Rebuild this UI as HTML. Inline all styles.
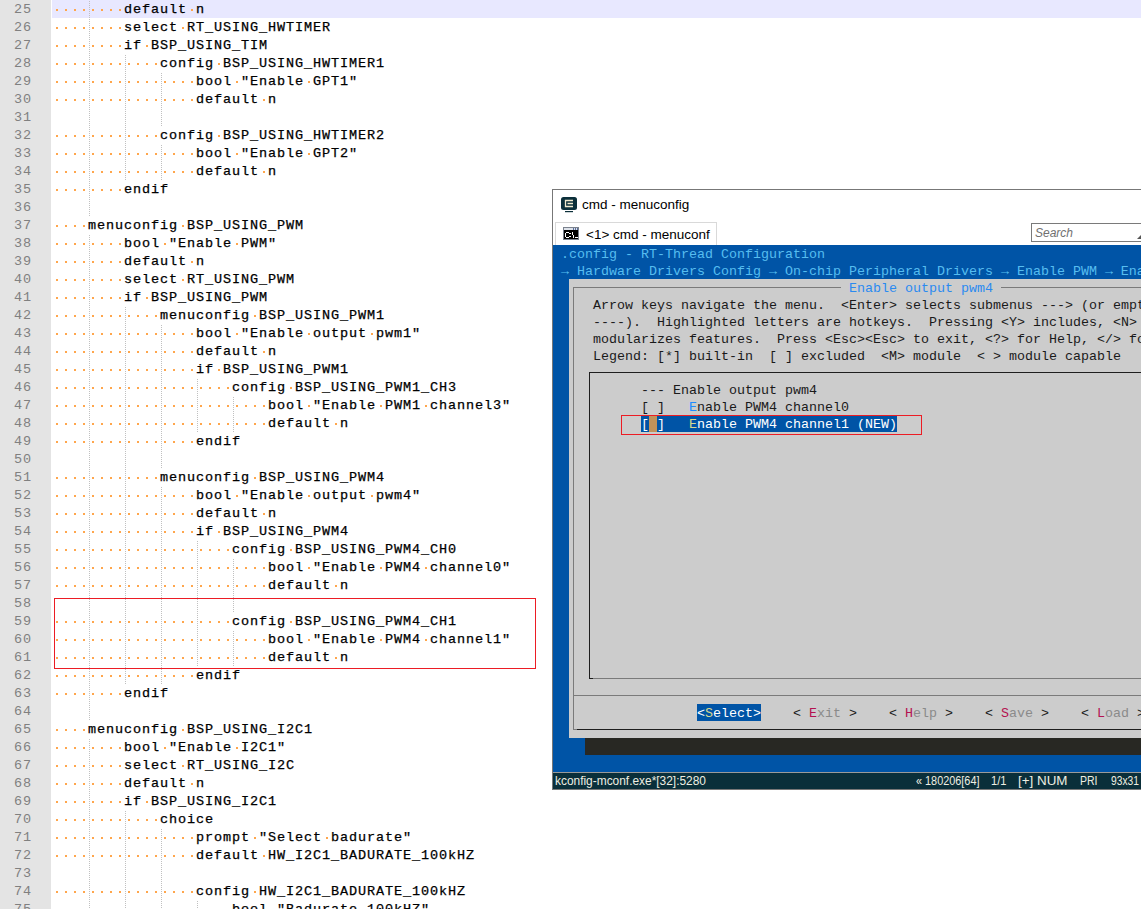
<!DOCTYPE html>
<html><head><meta charset="utf-8"><style>
html,body{margin:0;padding:0}
body{width:1141px;height:909px;overflow:hidden;position:relative;background:#fff}
.ln{position:absolute;left:52px;height:18px;line-height:18px;font:13.5px "Liberation Mono",monospace;letter-spacing:0.9px;padding-top:2px;white-space:pre;color:#000;-webkit-text-stroke:0.25px #000}
.nm{position:absolute;left:0;width:32px;text-align:right;height:18px;line-height:18px;font:13.5px "Liberation Mono",monospace;letter-spacing:0.9px;padding-top:2px;color:#808080}
.t{position:absolute;height:17px;line-height:17px;padding-top:2px;font:13.333px "Liberation Mono",monospace;white-space:pre}
.ui{position:absolute;font-family:"Liberation Sans",sans-serif;white-space:pre}
</style></head><body>
<div style="position:absolute;left:0;top:0;width:51px;height:909px;background:#e4e4e4"></div>
<div style="position:absolute;left:52px;top:0;width:1089px;height:18px;background:#e8e8ff"></div>
<svg style="position:absolute;left:0;top:0" width="1141" height="909">
<defs><pattern id="gp" width="1" height="2" patternUnits="userSpaceOnUse"><rect x="0" y="1" width="1" height="1" fill="#c0c0c0"/></pattern></defs>
<g fill="url(#gp)"><rect x="89" y="0" width="1" height="18"/><rect x="89" y="18" width="1" height="18"/><rect x="89" y="36" width="1" height="18"/><rect x="89" y="54" width="1" height="18"/><rect x="125" y="54" width="1" height="18"/><rect x="89" y="72" width="1" height="18"/><rect x="125" y="72" width="1" height="18"/><rect x="161" y="72" width="1" height="18"/><rect x="89" y="90" width="1" height="18"/><rect x="125" y="90" width="1" height="18"/><rect x="161" y="90" width="1" height="18"/><rect x="89" y="108" width="1" height="18"/><rect x="125" y="108" width="1" height="18"/><rect x="161" y="108" width="1" height="18"/><rect x="89" y="126" width="1" height="18"/><rect x="125" y="126" width="1" height="18"/><rect x="89" y="144" width="1" height="18"/><rect x="125" y="144" width="1" height="18"/><rect x="161" y="144" width="1" height="18"/><rect x="89" y="162" width="1" height="18"/><rect x="125" y="162" width="1" height="18"/><rect x="161" y="162" width="1" height="18"/><rect x="89" y="180" width="1" height="18"/><rect x="89" y="198" width="1" height="18"/><rect x="89" y="234" width="1" height="18"/><rect x="89" y="252" width="1" height="18"/><rect x="89" y="270" width="1" height="18"/><rect x="89" y="288" width="1" height="18"/><rect x="89" y="306" width="1" height="18"/><rect x="125" y="306" width="1" height="18"/><rect x="89" y="324" width="1" height="18"/><rect x="125" y="324" width="1" height="18"/><rect x="161" y="324" width="1" height="18"/><rect x="89" y="342" width="1" height="18"/><rect x="125" y="342" width="1" height="18"/><rect x="161" y="342" width="1" height="18"/><rect x="89" y="360" width="1" height="18"/><rect x="125" y="360" width="1" height="18"/><rect x="161" y="360" width="1" height="18"/><rect x="89" y="378" width="1" height="18"/><rect x="125" y="378" width="1" height="18"/><rect x="161" y="378" width="1" height="18"/><rect x="197" y="378" width="1" height="18"/><rect x="89" y="396" width="1" height="18"/><rect x="125" y="396" width="1" height="18"/><rect x="161" y="396" width="1" height="18"/><rect x="197" y="396" width="1" height="18"/><rect x="233" y="396" width="1" height="18"/><rect x="89" y="414" width="1" height="18"/><rect x="125" y="414" width="1" height="18"/><rect x="161" y="414" width="1" height="18"/><rect x="197" y="414" width="1" height="18"/><rect x="233" y="414" width="1" height="18"/><rect x="89" y="432" width="1" height="18"/><rect x="125" y="432" width="1" height="18"/><rect x="161" y="432" width="1" height="18"/><rect x="89" y="450" width="1" height="18"/><rect x="125" y="450" width="1" height="18"/><rect x="161" y="450" width="1" height="18"/><rect x="89" y="468" width="1" height="18"/><rect x="125" y="468" width="1" height="18"/><rect x="89" y="486" width="1" height="18"/><rect x="125" y="486" width="1" height="18"/><rect x="161" y="486" width="1" height="18"/><rect x="89" y="504" width="1" height="18"/><rect x="125" y="504" width="1" height="18"/><rect x="161" y="504" width="1" height="18"/><rect x="89" y="522" width="1" height="18"/><rect x="125" y="522" width="1" height="18"/><rect x="161" y="522" width="1" height="18"/><rect x="89" y="540" width="1" height="18"/><rect x="125" y="540" width="1" height="18"/><rect x="161" y="540" width="1" height="18"/><rect x="197" y="540" width="1" height="18"/><rect x="89" y="558" width="1" height="18"/><rect x="125" y="558" width="1" height="18"/><rect x="161" y="558" width="1" height="18"/><rect x="197" y="558" width="1" height="18"/><rect x="233" y="558" width="1" height="18"/><rect x="89" y="576" width="1" height="18"/><rect x="125" y="576" width="1" height="18"/><rect x="161" y="576" width="1" height="18"/><rect x="197" y="576" width="1" height="18"/><rect x="233" y="576" width="1" height="18"/><rect x="89" y="594" width="1" height="18"/><rect x="125" y="594" width="1" height="18"/><rect x="161" y="594" width="1" height="18"/><rect x="197" y="594" width="1" height="18"/><rect x="233" y="594" width="1" height="18"/><rect x="89" y="612" width="1" height="18"/><rect x="125" y="612" width="1" height="18"/><rect x="161" y="612" width="1" height="18"/><rect x="197" y="612" width="1" height="18"/><rect x="89" y="630" width="1" height="18"/><rect x="125" y="630" width="1" height="18"/><rect x="161" y="630" width="1" height="18"/><rect x="197" y="630" width="1" height="18"/><rect x="233" y="630" width="1" height="18"/><rect x="89" y="648" width="1" height="18"/><rect x="125" y="648" width="1" height="18"/><rect x="161" y="648" width="1" height="18"/><rect x="197" y="648" width="1" height="18"/><rect x="233" y="648" width="1" height="18"/><rect x="89" y="666" width="1" height="18"/><rect x="125" y="666" width="1" height="18"/><rect x="161" y="666" width="1" height="18"/><rect x="89" y="684" width="1" height="18"/><rect x="89" y="702" width="1" height="18"/><rect x="89" y="738" width="1" height="18"/><rect x="89" y="756" width="1" height="18"/><rect x="89" y="774" width="1" height="18"/><rect x="89" y="792" width="1" height="18"/><rect x="89" y="810" width="1" height="18"/><rect x="125" y="810" width="1" height="18"/><rect x="89" y="828" width="1" height="18"/><rect x="125" y="828" width="1" height="18"/><rect x="161" y="828" width="1" height="18"/><rect x="89" y="846" width="1" height="18"/><rect x="125" y="846" width="1" height="18"/><rect x="161" y="846" width="1" height="18"/><rect x="89" y="864" width="1" height="18"/><rect x="125" y="864" width="1" height="18"/><rect x="161" y="864" width="1" height="18"/><rect x="89" y="882" width="1" height="18"/><rect x="125" y="882" width="1" height="18"/><rect x="161" y="882" width="1" height="18"/><rect x="89" y="900" width="1" height="18"/><rect x="125" y="900" width="1" height="18"/><rect x="161" y="900" width="1" height="18"/><rect x="197" y="900" width="1" height="18"/><rect x="89" y="918" width="1" height="18"/><rect x="125" y="918" width="1" height="18"/><rect x="161" y="918" width="1" height="18"/><rect x="197" y="918" width="1" height="18"/></g>
<path fill="#ffa64c" d="M56 9h2v2h-2zM65 9h2v2h-2zM74 9h2v2h-2zM83 9h2v2h-2zM92 9h2v2h-2zM101 9h2v2h-2zM110 9h2v2h-2zM119 9h2v2h-2zM191 9h2v2h-2zM56 27h2v2h-2zM65 27h2v2h-2zM74 27h2v2h-2zM83 27h2v2h-2zM92 27h2v2h-2zM101 27h2v2h-2zM110 27h2v2h-2zM119 27h2v2h-2zM182 27h2v2h-2zM56 45h2v2h-2zM65 45h2v2h-2zM74 45h2v2h-2zM83 45h2v2h-2zM92 45h2v2h-2zM101 45h2v2h-2zM110 45h2v2h-2zM119 45h2v2h-2zM146 45h2v2h-2zM56 63h2v2h-2zM65 63h2v2h-2zM74 63h2v2h-2zM83 63h2v2h-2zM92 63h2v2h-2zM101 63h2v2h-2zM110 63h2v2h-2zM119 63h2v2h-2zM128 63h2v2h-2zM137 63h2v2h-2zM146 63h2v2h-2zM155 63h2v2h-2zM218 63h2v2h-2zM56 81h2v2h-2zM65 81h2v2h-2zM74 81h2v2h-2zM83 81h2v2h-2zM92 81h2v2h-2zM101 81h2v2h-2zM110 81h2v2h-2zM119 81h2v2h-2zM128 81h2v2h-2zM137 81h2v2h-2zM146 81h2v2h-2zM155 81h2v2h-2zM164 81h2v2h-2zM173 81h2v2h-2zM182 81h2v2h-2zM191 81h2v2h-2zM236 81h2v2h-2zM308 81h2v2h-2zM56 99h2v2h-2zM65 99h2v2h-2zM74 99h2v2h-2zM83 99h2v2h-2zM92 99h2v2h-2zM101 99h2v2h-2zM110 99h2v2h-2zM119 99h2v2h-2zM128 99h2v2h-2zM137 99h2v2h-2zM146 99h2v2h-2zM155 99h2v2h-2zM164 99h2v2h-2zM173 99h2v2h-2zM182 99h2v2h-2zM191 99h2v2h-2zM263 99h2v2h-2zM56 135h2v2h-2zM65 135h2v2h-2zM74 135h2v2h-2zM83 135h2v2h-2zM92 135h2v2h-2zM101 135h2v2h-2zM110 135h2v2h-2zM119 135h2v2h-2zM128 135h2v2h-2zM137 135h2v2h-2zM146 135h2v2h-2zM155 135h2v2h-2zM218 135h2v2h-2zM56 153h2v2h-2zM65 153h2v2h-2zM74 153h2v2h-2zM83 153h2v2h-2zM92 153h2v2h-2zM101 153h2v2h-2zM110 153h2v2h-2zM119 153h2v2h-2zM128 153h2v2h-2zM137 153h2v2h-2zM146 153h2v2h-2zM155 153h2v2h-2zM164 153h2v2h-2zM173 153h2v2h-2zM182 153h2v2h-2zM191 153h2v2h-2zM236 153h2v2h-2zM308 153h2v2h-2zM56 171h2v2h-2zM65 171h2v2h-2zM74 171h2v2h-2zM83 171h2v2h-2zM92 171h2v2h-2zM101 171h2v2h-2zM110 171h2v2h-2zM119 171h2v2h-2zM128 171h2v2h-2zM137 171h2v2h-2zM146 171h2v2h-2zM155 171h2v2h-2zM164 171h2v2h-2zM173 171h2v2h-2zM182 171h2v2h-2zM191 171h2v2h-2zM263 171h2v2h-2zM56 189h2v2h-2zM65 189h2v2h-2zM74 189h2v2h-2zM83 189h2v2h-2zM92 189h2v2h-2zM101 189h2v2h-2zM110 189h2v2h-2zM119 189h2v2h-2zM56 225h2v2h-2zM65 225h2v2h-2zM74 225h2v2h-2zM83 225h2v2h-2zM182 225h2v2h-2zM56 243h2v2h-2zM65 243h2v2h-2zM74 243h2v2h-2zM83 243h2v2h-2zM92 243h2v2h-2zM101 243h2v2h-2zM110 243h2v2h-2zM119 243h2v2h-2zM164 243h2v2h-2zM236 243h2v2h-2zM56 261h2v2h-2zM65 261h2v2h-2zM74 261h2v2h-2zM83 261h2v2h-2zM92 261h2v2h-2zM101 261h2v2h-2zM110 261h2v2h-2zM119 261h2v2h-2zM191 261h2v2h-2zM56 279h2v2h-2zM65 279h2v2h-2zM74 279h2v2h-2zM83 279h2v2h-2zM92 279h2v2h-2zM101 279h2v2h-2zM110 279h2v2h-2zM119 279h2v2h-2zM182 279h2v2h-2zM56 297h2v2h-2zM65 297h2v2h-2zM74 297h2v2h-2zM83 297h2v2h-2zM92 297h2v2h-2zM101 297h2v2h-2zM110 297h2v2h-2zM119 297h2v2h-2zM146 297h2v2h-2zM56 315h2v2h-2zM65 315h2v2h-2zM74 315h2v2h-2zM83 315h2v2h-2zM92 315h2v2h-2zM101 315h2v2h-2zM110 315h2v2h-2zM119 315h2v2h-2zM128 315h2v2h-2zM137 315h2v2h-2zM146 315h2v2h-2zM155 315h2v2h-2zM254 315h2v2h-2zM56 333h2v2h-2zM65 333h2v2h-2zM74 333h2v2h-2zM83 333h2v2h-2zM92 333h2v2h-2zM101 333h2v2h-2zM110 333h2v2h-2zM119 333h2v2h-2zM128 333h2v2h-2zM137 333h2v2h-2zM146 333h2v2h-2zM155 333h2v2h-2zM164 333h2v2h-2zM173 333h2v2h-2zM182 333h2v2h-2zM191 333h2v2h-2zM236 333h2v2h-2zM308 333h2v2h-2zM371 333h2v2h-2zM56 351h2v2h-2zM65 351h2v2h-2zM74 351h2v2h-2zM83 351h2v2h-2zM92 351h2v2h-2zM101 351h2v2h-2zM110 351h2v2h-2zM119 351h2v2h-2zM128 351h2v2h-2zM137 351h2v2h-2zM146 351h2v2h-2zM155 351h2v2h-2zM164 351h2v2h-2zM173 351h2v2h-2zM182 351h2v2h-2zM191 351h2v2h-2zM263 351h2v2h-2zM56 369h2v2h-2zM65 369h2v2h-2zM74 369h2v2h-2zM83 369h2v2h-2zM92 369h2v2h-2zM101 369h2v2h-2zM110 369h2v2h-2zM119 369h2v2h-2zM128 369h2v2h-2zM137 369h2v2h-2zM146 369h2v2h-2zM155 369h2v2h-2zM164 369h2v2h-2zM173 369h2v2h-2zM182 369h2v2h-2zM191 369h2v2h-2zM218 369h2v2h-2zM56 387h2v2h-2zM65 387h2v2h-2zM74 387h2v2h-2zM83 387h2v2h-2zM92 387h2v2h-2zM101 387h2v2h-2zM110 387h2v2h-2zM119 387h2v2h-2zM128 387h2v2h-2zM137 387h2v2h-2zM146 387h2v2h-2zM155 387h2v2h-2zM164 387h2v2h-2zM173 387h2v2h-2zM182 387h2v2h-2zM191 387h2v2h-2zM200 387h2v2h-2zM209 387h2v2h-2zM218 387h2v2h-2zM227 387h2v2h-2zM290 387h2v2h-2zM56 405h2v2h-2zM65 405h2v2h-2zM74 405h2v2h-2zM83 405h2v2h-2zM92 405h2v2h-2zM101 405h2v2h-2zM110 405h2v2h-2zM119 405h2v2h-2zM128 405h2v2h-2zM137 405h2v2h-2zM146 405h2v2h-2zM155 405h2v2h-2zM164 405h2v2h-2zM173 405h2v2h-2zM182 405h2v2h-2zM191 405h2v2h-2zM200 405h2v2h-2zM209 405h2v2h-2zM218 405h2v2h-2zM227 405h2v2h-2zM236 405h2v2h-2zM245 405h2v2h-2zM254 405h2v2h-2zM263 405h2v2h-2zM308 405h2v2h-2zM380 405h2v2h-2zM425 405h2v2h-2zM56 423h2v2h-2zM65 423h2v2h-2zM74 423h2v2h-2zM83 423h2v2h-2zM92 423h2v2h-2zM101 423h2v2h-2zM110 423h2v2h-2zM119 423h2v2h-2zM128 423h2v2h-2zM137 423h2v2h-2zM146 423h2v2h-2zM155 423h2v2h-2zM164 423h2v2h-2zM173 423h2v2h-2zM182 423h2v2h-2zM191 423h2v2h-2zM200 423h2v2h-2zM209 423h2v2h-2zM218 423h2v2h-2zM227 423h2v2h-2zM236 423h2v2h-2zM245 423h2v2h-2zM254 423h2v2h-2zM263 423h2v2h-2zM335 423h2v2h-2zM56 441h2v2h-2zM65 441h2v2h-2zM74 441h2v2h-2zM83 441h2v2h-2zM92 441h2v2h-2zM101 441h2v2h-2zM110 441h2v2h-2zM119 441h2v2h-2zM128 441h2v2h-2zM137 441h2v2h-2zM146 441h2v2h-2zM155 441h2v2h-2zM164 441h2v2h-2zM173 441h2v2h-2zM182 441h2v2h-2zM191 441h2v2h-2zM56 477h2v2h-2zM65 477h2v2h-2zM74 477h2v2h-2zM83 477h2v2h-2zM92 477h2v2h-2zM101 477h2v2h-2zM110 477h2v2h-2zM119 477h2v2h-2zM128 477h2v2h-2zM137 477h2v2h-2zM146 477h2v2h-2zM155 477h2v2h-2zM254 477h2v2h-2zM56 495h2v2h-2zM65 495h2v2h-2zM74 495h2v2h-2zM83 495h2v2h-2zM92 495h2v2h-2zM101 495h2v2h-2zM110 495h2v2h-2zM119 495h2v2h-2zM128 495h2v2h-2zM137 495h2v2h-2zM146 495h2v2h-2zM155 495h2v2h-2zM164 495h2v2h-2zM173 495h2v2h-2zM182 495h2v2h-2zM191 495h2v2h-2zM236 495h2v2h-2zM308 495h2v2h-2zM371 495h2v2h-2zM56 513h2v2h-2zM65 513h2v2h-2zM74 513h2v2h-2zM83 513h2v2h-2zM92 513h2v2h-2zM101 513h2v2h-2zM110 513h2v2h-2zM119 513h2v2h-2zM128 513h2v2h-2zM137 513h2v2h-2zM146 513h2v2h-2zM155 513h2v2h-2zM164 513h2v2h-2zM173 513h2v2h-2zM182 513h2v2h-2zM191 513h2v2h-2zM263 513h2v2h-2zM56 531h2v2h-2zM65 531h2v2h-2zM74 531h2v2h-2zM83 531h2v2h-2zM92 531h2v2h-2zM101 531h2v2h-2zM110 531h2v2h-2zM119 531h2v2h-2zM128 531h2v2h-2zM137 531h2v2h-2zM146 531h2v2h-2zM155 531h2v2h-2zM164 531h2v2h-2zM173 531h2v2h-2zM182 531h2v2h-2zM191 531h2v2h-2zM218 531h2v2h-2zM56 549h2v2h-2zM65 549h2v2h-2zM74 549h2v2h-2zM83 549h2v2h-2zM92 549h2v2h-2zM101 549h2v2h-2zM110 549h2v2h-2zM119 549h2v2h-2zM128 549h2v2h-2zM137 549h2v2h-2zM146 549h2v2h-2zM155 549h2v2h-2zM164 549h2v2h-2zM173 549h2v2h-2zM182 549h2v2h-2zM191 549h2v2h-2zM200 549h2v2h-2zM209 549h2v2h-2zM218 549h2v2h-2zM227 549h2v2h-2zM290 549h2v2h-2zM56 567h2v2h-2zM65 567h2v2h-2zM74 567h2v2h-2zM83 567h2v2h-2zM92 567h2v2h-2zM101 567h2v2h-2zM110 567h2v2h-2zM119 567h2v2h-2zM128 567h2v2h-2zM137 567h2v2h-2zM146 567h2v2h-2zM155 567h2v2h-2zM164 567h2v2h-2zM173 567h2v2h-2zM182 567h2v2h-2zM191 567h2v2h-2zM200 567h2v2h-2zM209 567h2v2h-2zM218 567h2v2h-2zM227 567h2v2h-2zM236 567h2v2h-2zM245 567h2v2h-2zM254 567h2v2h-2zM263 567h2v2h-2zM308 567h2v2h-2zM380 567h2v2h-2zM425 567h2v2h-2zM56 585h2v2h-2zM65 585h2v2h-2zM74 585h2v2h-2zM83 585h2v2h-2zM92 585h2v2h-2zM101 585h2v2h-2zM110 585h2v2h-2zM119 585h2v2h-2zM128 585h2v2h-2zM137 585h2v2h-2zM146 585h2v2h-2zM155 585h2v2h-2zM164 585h2v2h-2zM173 585h2v2h-2zM182 585h2v2h-2zM191 585h2v2h-2zM200 585h2v2h-2zM209 585h2v2h-2zM218 585h2v2h-2zM227 585h2v2h-2zM236 585h2v2h-2zM245 585h2v2h-2zM254 585h2v2h-2zM263 585h2v2h-2zM335 585h2v2h-2zM56 621h2v2h-2zM65 621h2v2h-2zM74 621h2v2h-2zM83 621h2v2h-2zM92 621h2v2h-2zM101 621h2v2h-2zM110 621h2v2h-2zM119 621h2v2h-2zM128 621h2v2h-2zM137 621h2v2h-2zM146 621h2v2h-2zM155 621h2v2h-2zM164 621h2v2h-2zM173 621h2v2h-2zM182 621h2v2h-2zM191 621h2v2h-2zM200 621h2v2h-2zM209 621h2v2h-2zM218 621h2v2h-2zM227 621h2v2h-2zM290 621h2v2h-2zM56 639h2v2h-2zM65 639h2v2h-2zM74 639h2v2h-2zM83 639h2v2h-2zM92 639h2v2h-2zM101 639h2v2h-2zM110 639h2v2h-2zM119 639h2v2h-2zM128 639h2v2h-2zM137 639h2v2h-2zM146 639h2v2h-2zM155 639h2v2h-2zM164 639h2v2h-2zM173 639h2v2h-2zM182 639h2v2h-2zM191 639h2v2h-2zM200 639h2v2h-2zM209 639h2v2h-2zM218 639h2v2h-2zM227 639h2v2h-2zM236 639h2v2h-2zM245 639h2v2h-2zM254 639h2v2h-2zM263 639h2v2h-2zM308 639h2v2h-2zM380 639h2v2h-2zM425 639h2v2h-2zM56 657h2v2h-2zM65 657h2v2h-2zM74 657h2v2h-2zM83 657h2v2h-2zM92 657h2v2h-2zM101 657h2v2h-2zM110 657h2v2h-2zM119 657h2v2h-2zM128 657h2v2h-2zM137 657h2v2h-2zM146 657h2v2h-2zM155 657h2v2h-2zM164 657h2v2h-2zM173 657h2v2h-2zM182 657h2v2h-2zM191 657h2v2h-2zM200 657h2v2h-2zM209 657h2v2h-2zM218 657h2v2h-2zM227 657h2v2h-2zM236 657h2v2h-2zM245 657h2v2h-2zM254 657h2v2h-2zM263 657h2v2h-2zM335 657h2v2h-2zM56 675h2v2h-2zM65 675h2v2h-2zM74 675h2v2h-2zM83 675h2v2h-2zM92 675h2v2h-2zM101 675h2v2h-2zM110 675h2v2h-2zM119 675h2v2h-2zM128 675h2v2h-2zM137 675h2v2h-2zM146 675h2v2h-2zM155 675h2v2h-2zM164 675h2v2h-2zM173 675h2v2h-2zM182 675h2v2h-2zM191 675h2v2h-2zM56 693h2v2h-2zM65 693h2v2h-2zM74 693h2v2h-2zM83 693h2v2h-2zM92 693h2v2h-2zM101 693h2v2h-2zM110 693h2v2h-2zM119 693h2v2h-2zM56 729h2v2h-2zM65 729h2v2h-2zM74 729h2v2h-2zM83 729h2v2h-2zM182 729h2v2h-2zM56 747h2v2h-2zM65 747h2v2h-2zM74 747h2v2h-2zM83 747h2v2h-2zM92 747h2v2h-2zM101 747h2v2h-2zM110 747h2v2h-2zM119 747h2v2h-2zM164 747h2v2h-2zM236 747h2v2h-2zM56 765h2v2h-2zM65 765h2v2h-2zM74 765h2v2h-2zM83 765h2v2h-2zM92 765h2v2h-2zM101 765h2v2h-2zM110 765h2v2h-2zM119 765h2v2h-2zM182 765h2v2h-2zM56 783h2v2h-2zM65 783h2v2h-2zM74 783h2v2h-2zM83 783h2v2h-2zM92 783h2v2h-2zM101 783h2v2h-2zM110 783h2v2h-2zM119 783h2v2h-2zM191 783h2v2h-2zM56 801h2v2h-2zM65 801h2v2h-2zM74 801h2v2h-2zM83 801h2v2h-2zM92 801h2v2h-2zM101 801h2v2h-2zM110 801h2v2h-2zM119 801h2v2h-2zM146 801h2v2h-2zM56 819h2v2h-2zM65 819h2v2h-2zM74 819h2v2h-2zM83 819h2v2h-2zM92 819h2v2h-2zM101 819h2v2h-2zM110 819h2v2h-2zM119 819h2v2h-2zM128 819h2v2h-2zM137 819h2v2h-2zM146 819h2v2h-2zM155 819h2v2h-2zM56 837h2v2h-2zM65 837h2v2h-2zM74 837h2v2h-2zM83 837h2v2h-2zM92 837h2v2h-2zM101 837h2v2h-2zM110 837h2v2h-2zM119 837h2v2h-2zM128 837h2v2h-2zM137 837h2v2h-2zM146 837h2v2h-2zM155 837h2v2h-2zM164 837h2v2h-2zM173 837h2v2h-2zM182 837h2v2h-2zM191 837h2v2h-2zM254 837h2v2h-2zM326 837h2v2h-2zM56 855h2v2h-2zM65 855h2v2h-2zM74 855h2v2h-2zM83 855h2v2h-2zM92 855h2v2h-2zM101 855h2v2h-2zM110 855h2v2h-2zM119 855h2v2h-2zM128 855h2v2h-2zM137 855h2v2h-2zM146 855h2v2h-2zM155 855h2v2h-2zM164 855h2v2h-2zM173 855h2v2h-2zM182 855h2v2h-2zM191 855h2v2h-2zM263 855h2v2h-2zM56 891h2v2h-2zM65 891h2v2h-2zM74 891h2v2h-2zM83 891h2v2h-2zM92 891h2v2h-2zM101 891h2v2h-2zM110 891h2v2h-2zM119 891h2v2h-2zM128 891h2v2h-2zM137 891h2v2h-2zM146 891h2v2h-2zM155 891h2v2h-2zM164 891h2v2h-2zM173 891h2v2h-2zM182 891h2v2h-2zM191 891h2v2h-2zM254 891h2v2h-2zM56 909h2v2h-2zM65 909h2v2h-2zM74 909h2v2h-2zM83 909h2v2h-2zM92 909h2v2h-2zM101 909h2v2h-2zM110 909h2v2h-2zM119 909h2v2h-2zM128 909h2v2h-2zM137 909h2v2h-2zM146 909h2v2h-2zM155 909h2v2h-2zM164 909h2v2h-2zM173 909h2v2h-2zM182 909h2v2h-2zM191 909h2v2h-2zM200 909h2v2h-2zM209 909h2v2h-2zM218 909h2v2h-2zM227 909h2v2h-2zM272 909h2v2h-2zM362 909h2v2h-2zM56 927h2v2h-2zM65 927h2v2h-2zM74 927h2v2h-2zM83 927h2v2h-2zM92 927h2v2h-2zM101 927h2v2h-2zM110 927h2v2h-2zM119 927h2v2h-2zM128 927h2v2h-2zM137 927h2v2h-2zM146 927h2v2h-2zM155 927h2v2h-2zM164 927h2v2h-2zM173 927h2v2h-2zM182 927h2v2h-2zM191 927h2v2h-2zM200 927h2v2h-2zM209 927h2v2h-2zM218 927h2v2h-2zM227 927h2v2h-2zM299 927h2v2h-2z"/>
</svg>
<div class="nm" style="top:0px">25</div><div class="nm" style="top:18px">26</div><div class="nm" style="top:36px">27</div><div class="nm" style="top:54px">28</div><div class="nm" style="top:72px">29</div><div class="nm" style="top:90px">30</div><div class="nm" style="top:108px">31</div><div class="nm" style="top:126px">32</div><div class="nm" style="top:144px">33</div><div class="nm" style="top:162px">34</div><div class="nm" style="top:180px">35</div><div class="nm" style="top:198px">36</div><div class="nm" style="top:216px">37</div><div class="nm" style="top:234px">38</div><div class="nm" style="top:252px">39</div><div class="nm" style="top:270px">40</div><div class="nm" style="top:288px">41</div><div class="nm" style="top:306px">42</div><div class="nm" style="top:324px">43</div><div class="nm" style="top:342px">44</div><div class="nm" style="top:360px">45</div><div class="nm" style="top:378px">46</div><div class="nm" style="top:396px">47</div><div class="nm" style="top:414px">48</div><div class="nm" style="top:432px">49</div><div class="nm" style="top:450px">50</div><div class="nm" style="top:468px">51</div><div class="nm" style="top:486px">52</div><div class="nm" style="top:504px">53</div><div class="nm" style="top:522px">54</div><div class="nm" style="top:540px">55</div><div class="nm" style="top:558px">56</div><div class="nm" style="top:576px">57</div><div class="nm" style="top:594px">58</div><div class="nm" style="top:612px">59</div><div class="nm" style="top:630px">60</div><div class="nm" style="top:648px">61</div><div class="nm" style="top:666px">62</div><div class="nm" style="top:684px">63</div><div class="nm" style="top:702px">64</div><div class="nm" style="top:720px">65</div><div class="nm" style="top:738px">66</div><div class="nm" style="top:756px">67</div><div class="nm" style="top:774px">68</div><div class="nm" style="top:792px">69</div><div class="nm" style="top:810px">70</div><div class="nm" style="top:828px">71</div><div class="nm" style="top:846px">72</div><div class="nm" style="top:864px">73</div><div class="nm" style="top:882px">74</div><div class="nm" style="top:900px">75</div><div class="nm" style="top:918px">76</div>
<div class="ln" style="top:0px">        default n</div><div class="ln" style="top:18px">        select RT_USING_HWTIMER</div><div class="ln" style="top:36px">        if BSP_USING_TIM</div><div class="ln" style="top:54px">            config BSP_USING_HWTIMER1</div><div class="ln" style="top:72px">                bool &quot;Enable GPT1&quot;</div><div class="ln" style="top:90px">                default n</div><div class="ln" style="top:108px"></div><div class="ln" style="top:126px">            config BSP_USING_HWTIMER2</div><div class="ln" style="top:144px">                bool &quot;Enable GPT2&quot;</div><div class="ln" style="top:162px">                default n</div><div class="ln" style="top:180px">        endif</div><div class="ln" style="top:198px"></div><div class="ln" style="top:216px">    menuconfig BSP_USING_PWM</div><div class="ln" style="top:234px">        bool &quot;Enable PWM&quot;</div><div class="ln" style="top:252px">        default n</div><div class="ln" style="top:270px">        select RT_USING_PWM</div><div class="ln" style="top:288px">        if BSP_USING_PWM</div><div class="ln" style="top:306px">            menuconfig BSP_USING_PWM1</div><div class="ln" style="top:324px">                bool &quot;Enable output pwm1&quot;</div><div class="ln" style="top:342px">                default n</div><div class="ln" style="top:360px">                if BSP_USING_PWM1</div><div class="ln" style="top:378px">                    config BSP_USING_PWM1_CH3</div><div class="ln" style="top:396px">                        bool &quot;Enable PWM1 channel3&quot;</div><div class="ln" style="top:414px">                        default n</div><div class="ln" style="top:432px">                endif</div><div class="ln" style="top:450px"></div><div class="ln" style="top:468px">            menuconfig BSP_USING_PWM4</div><div class="ln" style="top:486px">                bool &quot;Enable output pwm4&quot;</div><div class="ln" style="top:504px">                default n</div><div class="ln" style="top:522px">                if BSP_USING_PWM4</div><div class="ln" style="top:540px">                    config BSP_USING_PWM4_CH0</div><div class="ln" style="top:558px">                        bool &quot;Enable PWM4 channel0&quot;</div><div class="ln" style="top:576px">                        default n</div><div class="ln" style="top:594px"></div><div class="ln" style="top:612px">                    config BSP_USING_PWM4_CH1</div><div class="ln" style="top:630px">                        bool &quot;Enable PWM4 channel1&quot;</div><div class="ln" style="top:648px">                        default n</div><div class="ln" style="top:666px">                endif</div><div class="ln" style="top:684px">        endif</div><div class="ln" style="top:702px"></div><div class="ln" style="top:720px">    menuconfig BSP_USING_I2C1</div><div class="ln" style="top:738px">        bool &quot;Enable I2C1&quot;</div><div class="ln" style="top:756px">        select RT_USING_I2C</div><div class="ln" style="top:774px">        default n</div><div class="ln" style="top:792px">        if BSP_USING_I2C1</div><div class="ln" style="top:810px">            choice</div><div class="ln" style="top:828px">                prompt &quot;Select badurate&quot;</div><div class="ln" style="top:846px">                default HW_I2C1_BADURATE_100kHZ</div><div class="ln" style="top:864px"></div><div class="ln" style="top:882px">                config HW_I2C1_BADURATE_100kHZ</div><div class="ln" style="top:900px">                    bool &quot;Badurate 100kHZ&quot;</div><div class="ln" style="top:918px">                    default n</div>
<div style="position:absolute;left:54px;top:598px;width:480px;height:69px;border:1px solid #ec1c24"></div>

<div id="win" style="position:absolute;left:552px;top:189px;width:800px;height:599px;border:1px solid #777;border-right:none;background:#fff;overflow:hidden">
</div>
<div style="position:absolute;left:0;top:0;width:1141px;height:909px">
<svg style="position:absolute;left:561px;top:197px" width="17" height="17" viewBox="0 0 17 17">
<rect x="0" y="0" width="16" height="13" rx="2.5" fill="#0b2f3a"/>
<rect x="4" y="14" width="8" height="1.2" fill="#0b2f3a"/>
<path d="M12 3.5H4.5v6H12M6.5 6.5H12" stroke="#f0ead0" stroke-width="1.3" fill="none"/>
</svg>
<div class="ui" style="left:582px;top:197px;font-size:13.5px;line-height:16px;color:#000">cmd - menuconfig</div>
<div style="position:absolute;left:555px;top:222px;width:160px;height:23px;border:1px solid #d9d9d9;border-bottom:none;background:#fff"></div>
<svg style="position:absolute;left:0;top:0" width="1141" height="909" shape-rendering="crispEdges">
<rect x="563" y="227" width="16" height="13" fill="#7b828e"/>
<rect x="564" y="228" width="14" height="2" fill="#dde2ea"/>
<rect x="573" y="228" width="1" height="2" fill="#5a6e9a"/><rect x="575" y="228" width="1" height="2" fill="#5a6e9a"/><rect x="577" y="228" width="1" height="2" fill="#5a6e9a"/>
<rect x="564" y="230" width="14" height="9" fill="#000"/>
<g fill="#fff"><rect x="566" y="232" width="3" height="1"/><rect x="565" y="233" width="1" height="4"/><rect x="566" y="237" width="3" height="1"/><rect x="569" y="233" width="1" height="1"/><rect x="569" y="236" width="1" height="1"/>
<rect x="570" y="233" width="1" height="1"/><rect x="570" y="236" width="1" height="1"/>
<rect x="572" y="232" width="1" height="3"/><rect x="573" y="235" width="1" height="3"/>
<rect x="575" y="237" width="3" height="1"/></g>
</svg>
<div class="ui" style="left:586px;top:227px;font-size:13.5px;line-height:16px;color:#000">&lt;1&gt; cmd - menuconf</div>
<div style="position:absolute;left:1031px;top:223px;width:200px;height:17px;border:1px solid #7a7a7a;background:#fff"></div>
<div class="ui" style="left:1035px;top:225px;font-size:12px;line-height:16px;color:#707070;font-style:italic">Search</div>
<svg style="position:absolute;left:1137px;top:235px" width="4" height="4"><path d="M4 0v4h-4z" fill="#555"/></svg>
<div style="position:absolute;left:553px;top:245px;width:744px;height:527px;background:#0054a6"></div>
<div class="t" style="left:561px;top:245px;color:#56bdf0;">.config - RT-Thread Configuration</div><div class="t" style="left:561px;top:262px;color:#56bdf0;">→ Hardware Drivers Config → On-chip Peripheral Drivers → Enable PWM → Enable output pwm4</div><div style="position:absolute;left:569px;top:279px;width:704px;height:459px;background:#cccccc"></div><div style="position:absolute;left:585px;top:738px;width:704px;height:17px;background:#282823"></div><div style="position:absolute;left:573px;top:287px;width:800px;height:1px;background:#7a7a7a"></div><div style="position:absolute;left:573px;top:287px;width:1px;height:443px;background:#7a7a7a"></div><div style="position:absolute;left:573px;top:729px;width:4px;height:1px;background:#7a7a7a"></div><div style="position:absolute;left:577px;top:729px;width:800px;height:1px;background:#1e1e1e"></div><div style="position:absolute;left:573px;top:695px;width:800px;height:1px;background:#7a7a7a"></div><div style="position:absolute;left:841px;top:279px;width:160px;height:17px;background:#cccccc"></div><div class="t" style="left:849px;top:279px;color:#2a8af0;">Enable output pwm4</div><div class="t" style="left:593px;top:296px;color:#1a1a1a;">Arrow keys navigate the menu.  &lt;Enter&gt; selects submenus ---&gt; (or empty submenus</div><div class="t" style="left:593px;top:313px;color:#1a1a1a;">----).  Highlighted letters are hotkeys.  Pressing &lt;Y&gt; includes, &lt;N&gt; excludes, &lt;M&gt;</div><div class="t" style="left:593px;top:330px;color:#1a1a1a;">modularizes features.  Press &lt;Esc&gt;&lt;Esc&gt; to exit, &lt;?&gt; for Help, &lt;/&gt; for Search.</div><div class="t" style="left:593px;top:347px;color:#1a1a1a;">Legend: [*] built-in  [ ] excluded  &lt;M&gt; module  &lt; &gt; module capable</div><div style="position:absolute;left:589px;top:372px;width:800px;height:1px;background:#1e1e1e"></div><div style="position:absolute;left:589px;top:372px;width:1px;height:307px;background:#1e1e1e"></div><div style="position:absolute;left:593px;top:678px;width:800px;height:1px;background:#7a7a7a"></div><div style="position:absolute;left:589px;top:678px;width:4px;height:1px;background:#1e1e1e"></div><div class="t" style="left:641px;top:381px;color:#1a1a1a;">--- Enable output pwm4</div><div class="t" style="left:641px;top:398px;color:#1a1a1a;">[ ]   <span style="color:#1e8cff">E</span>nable PWM4 channel0</div><div style="position:absolute;left:641px;top:415px;width:256px;height:17px;background:#0054a6"></div><div style="position:absolute;left:649px;top:415px;width:8px;height:17px;background:#c0925a"></div><div class="t" style="left:641px;top:415px;color:#ffffff;">[ ]   <span style="color:#d8d890">E</span>nable PWM4 channel1 (NEW)</div><div style="position:absolute;left:621px;top:415px;width:299px;height:18px;border:1px solid #ec1c24"></div><div style="position:absolute;left:697px;top:704px;width:64px;height:17px;background:#0054a6"></div><div class="t" style="left:697px;top:704px;color:#ffffff;">&lt;<span style="color:#d8d890">S</span>elect&gt;</div><div class="t" style="left:793px;top:704px;color:#1a1a1a;">&lt; <span style="color:#b41250">E</span><span style="color:#8a8a8a">xit</span> &gt;</div><div class="t" style="left:889px;top:704px;color:#1a1a1a;">&lt; <span style="color:#b41250">H</span><span style="color:#8a8a8a">elp</span> &gt;</div><div class="t" style="left:985px;top:704px;color:#1a1a1a;">&lt; <span style="color:#b41250">S</span><span style="color:#8a8a8a">ave</span> &gt;</div><div class="t" style="left:1081px;top:704px;color:#1a1a1a;">&lt; <span style="color:#b41250">L</span><span style="color:#8a8a8a">oad</span> &gt;</div>
<div style="position:absolute;left:553px;top:772px;width:700px;height:1px;background:#9a9a9a"></div>
<div style="position:absolute;left:553px;top:773px;width:700px;height:16px;background:#0a2f3a"></div>
<svg style="position:absolute;left:0;top:0" width="1141" height="909" font-family="Liberation Sans" font-size="12" fill="#eeeee2">
<text x="555" y="785" textLength="151" lengthAdjust="spacingAndGlyphs">kconfig-mconf.exe*[32]:5280</text>
<text x="916" y="785" textLength="63.5" lengthAdjust="spacingAndGlyphs">« 180206[64]</text>
<text x="991" y="785" textLength="15.5" lengthAdjust="spacingAndGlyphs">1/1</text>
<text x="1018" y="785" textLength="49.5" lengthAdjust="spacingAndGlyphs">[+] NUM</text>
<text x="1080" y="785" textLength="17.5" lengthAdjust="spacingAndGlyphs">PRI</text>
<text x="1111" y="785" textLength="28" lengthAdjust="spacingAndGlyphs">93x31</text>
</svg>
</div>
</body></html>
